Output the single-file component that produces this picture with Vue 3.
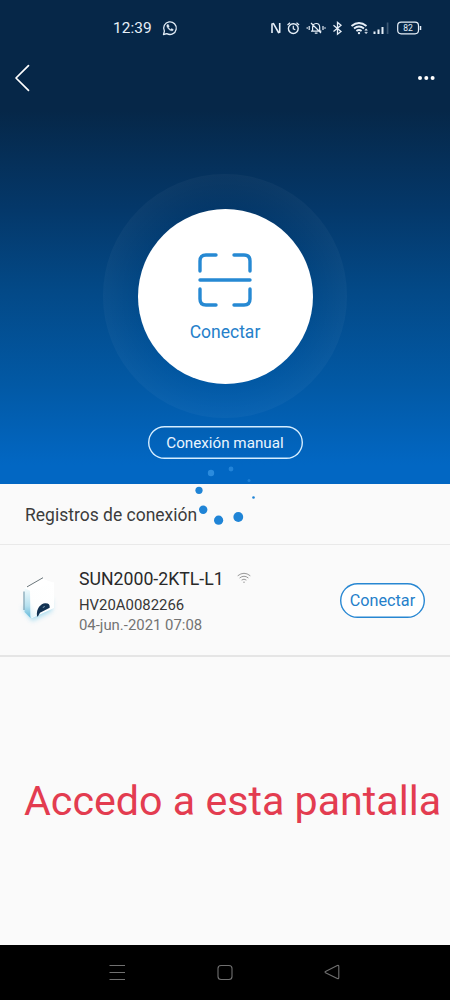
<script setup>
const dots = [
  { x: 21, y: 13, r: 3.2, o: 0.5 },
  { x: 41, y: 9, r: 2.4, o: 0.4 },
  { x: 59, y: 20.5, r: 1.5, o: 0.35 },
  { x: 63.5, y: 37.5, r: 1.3, o: 1 },
  { x: 9, y: 30.3, r: 3.6, o: 1 },
  { x: 13.2, y: 49.8, r: 4.2, o: 1 },
  { x: 28.6, y: 60.2, r: 4.6, o: 1 },
  { x: 48.3, y: 57, r: 4.9, o: 1 },
]
</script>

<template>
  <div class="screen">
    <section class="hero">
      <div class="status">
        <span class="clock">12:39</span>
        <svg class="chat" width="16" height="16" viewBox="0 0 16 16" fill="none" stroke="#e3edf7" stroke-width="1.3">
          <path d="M1.5 14.5l.9-3.4A6.3 6.3 0 1 1 4.8 13.6z" stroke-linejoin="round" />
          <path d="M5.2 4.6c-1 1.1-.2 3 1.3 4.5s3.500 2.300 4.600 1.200l.2-.8-1.700-.9-.9.8c-1-.4-1.800-1.200-2.200-2.200l.7-.8-.8-1.800z" fill="#e3edf7" stroke-width=".4" />
        </svg>
        <svg class="indicators" width="156" height="20" viewBox="268 18 156 20" fill="none" stroke="#e6eff8" stroke-width="1.4">
          <path d="M272 33V24l1.500-.4 5 8.900 1.200-.4V23" stroke-width="1.600" />
          <circle cx="293.300" cy="28.600" r="4.900" />
          <path d="M293.300 25.800v3l2 1M287.500 25l2.600-2.300M299.100 25l-2.600-2.300" stroke-width="1.200" />
          <path d="M311 31.200h10.400M312.600 31v-3.500q0-3.800 3.500-4t3.600 4V31M314.800 33.100h2.700M311 23l10 10" stroke-width="1.200" />
          <path d="M309.200 26v4M307.200 27.200v1.600M323 26v4M325 27.200v1.600" stroke-width="1.200" />
          <path d="M333.500 25.200l7.500 6.200-3.500 2.800V22.400l3.500 2.800-7.500 6.200" stroke-width="1.300" />
          <path d="M351.500 26q7.500-6 15 0M354 28.600q5-4 10 0M356.400 31q2.600-2 5.200 0" stroke-width="1.900" />
          <circle cx="359" cy="33.100" r="1.200" fill="#e6eff8" stroke="none" />
          <path d="M364.800 30.300l1.300-1.500 1.300 1.500zM364.800 32.200l1.300 1.500 1.300-1.500z" fill="#e6eff8" stroke-width=".5" />
          <path d="M374.500 34v-2.500M378.500 34v-4.600M382.500 34v-7" stroke-width="2" />
          <path d="M387.600 34V22.500" stroke="#3c5874" stroke-width="1.700" />
          <rect x="397.700" y="22.200" width="20.800" height="11.600" rx="3.500" stroke-width="1.200" />
          <path d="M420.500 26v4" stroke-width="1.500" />
          <text x="408.100" y="31.200" text-anchor="middle" class="level">82</text>
        </svg>
      </div>
      <nav class="topbar">
        <svg width="18" height="28" viewBox="0 0 18 28" fill="none" stroke="#fff" stroke-width="1.700" stroke-linecap="round" stroke-linejoin="round">
          <path d="M15.500 1.700L3 14l12.500 12.300" />
        </svg>
        <svg width="20" height="8" viewBox="0 0 20 8" fill="#fff">
          <circle cx="4" cy="4" r="2" /><circle cx="10.300" cy="4" r="2" /><circle cx="16.600" cy="4" r="2" />
        </svg>
      </nav>
      <div class="halo">
        <div class="disc">
          <svg width="54" height="54" viewBox="0 0 54 54" fill="none" stroke="#2689d3" stroke-width="3.400" stroke-linecap="round">
            <path d="M2 18V8q0-6 6-6h10M36 2h10q6 0 6 6v10M2 36v10q0 6 6 6h10M36 52h10q6 0 6-6V36M2 27h50" />
          </svg>
          <span class="disc-label">Conectar</span>
        </div>
      </div>
      <button class="manual">Conexión manual</button>
    </section>

    <main class="records">
      <h2 class="heading">
        <span>Registros de conexión</span>
        <svg class="spinner" width="70" height="70" viewBox="0 0 70 70" fill="#1f84d6">
          <circle v-for="(d, i) in dots" :key="i" :cx="d.x" :cy="d.y" :r="d.r" :class="{ faded: d.o < 1 }" :fill-opacity="d.o" />
        </svg>
      </h2>
      <article class="record">
        <svg class="device" width="44" height="54" viewBox="0 0 44 54">
          <defs>
            <linearGradient id="side" x1="0" y1="0" x2="0" y2="1">
              <stop offset="0" stop-color="#f3fbfd" /><stop offset=".6" stop-color="#b5e0ef" /><stop offset="1" stop-color="#62b8d9" />
            </linearGradient>
            <linearGradient id="front" x1="1" y1="0" x2="0" y2="1">
              <stop offset="0" stop-color="#fff" /><stop offset=".75" stop-color="#fdfefe" /><stop offset="1" stop-color="#d9f0f8" />
            </linearGradient>
            <filter id="soft" x="-50%" y="-50%" width="200%" height="200%"><feGaussianBlur stdDeviation="2.500" /></filter>
          </defs>
          <path d="M7 34L17 48 37 38V26L13 34z" fill="#8ed2ec" filter="url(#soft)" opacity=".75" />
          <path d="M9.500 15L26 5 39 10V35L17 45 9.500 38z" fill="#fff" />
          <path d="M9.500 15L15.500 18V45L9.500 39z" fill="url(#side)" />
          <path d="M15 18L39 9V34L16 45z" fill="url(#front)" />
          <path d="M12 13.900L28 4.700" stroke="#59656b" stroke-width=".9" />
          <path d="M9 18.500V37" stroke="#5e8da2" stroke-width="1" />
          <path d="M22 43.500C21 35 26 30.800 30 30.300c3.500-.2 5 1.300 4.700 4.400l-9.700 5-2 3.500z" fill="#123252" />
          <path d="M27.800 34.500l2-1" stroke="#86a6bb" />
        </svg>
        <div class="info">
          <div class="name">
            <span>SUN2000-2KTL-L1</span>
            <svg width="14" height="12" viewBox="0 0 14 12" fill="none" stroke="#8c8c8c" stroke-width=".9">
              <path d="M.7 3.800q6.300-5 12.600 0M2.600 6q4.400-3.500 8.800 0M4.600 8.100q2.400-1.900 4.800 0" />
              <circle cx="7" cy="10.200" r=".6" fill="#777" stroke="none" />
            </svg>
          </div>
          <div class="serial">HV20A0082266</div>
          <div class="date">04-jun.-2021 07:08</div>
        </div>
        <button class="connect">Conectar</button>
      </article>
      <p class="caption">Accedo a esta pantalla</p>
    </main>

    <footer class="navbar">
      <svg width="18" height="18" viewBox="0 0 18 18" fill="none" stroke="#707070" stroke-width="1.100"><path d="M1.500 2.500h15.500M1.500 9.500h15.500M1.500 16.500h15.500" /></svg>
      <svg width="18" height="18" viewBox="0 0 18 18" fill="none" stroke="#707070" stroke-width="1.100"><rect x="2" y="2.500" width="14" height="14" rx="3" /></svg>
      <svg width="18" height="18" viewBox="0 0 18 18" fill="none" stroke="#707070" stroke-width="1.100" stroke-linejoin="round"><path d="M2.500 8.500L14.300 2.500q1.500-.5 1.500 1v11q0 1.500-1.500 1L2.500 9.700q-1-.6 0-1.200z" /></svg>
    </footer>
  </div>
</template>

<style>
body { margin: 0; }
</style>

<style scoped>
.screen { width: 450px; height: 1000px; display: flex; flex-direction: column; overflow: hidden; background: #fafafa; font-family: Roboto, sans-serif; }
.screen * { box-sizing: border-box; }
svg { display: block; flex: none; }
button { padding: 0; border: 0; font-family: inherit; white-space: nowrap; }
.hero { height: 484px; flex: none; display: flex; flex-direction: column; align-items: center; background: linear-gradient(#062748 0, #062748 110px, #04386a 210px, #034987 290px, #0259a5 385px, #0267c3 465px, #0267c3 100%); }
.status { width: 100%; height: 56px; display: flex; align-items: center; padding: 0 26px 0 113px; }
.clock { width: 49px; font-size: 15.4px; letter-spacing: .1px; color: #e6eff8; }
.indicators { margin-left: auto; }
.level { font-size: 8.5px; fill: #e6eff8; stroke: none; }
.topbar { width: 100%; height: 44px; display: flex; align-items: center; justify-content: space-between; padding: 0 14px 0 13px; }
.halo { width: 244px; height: 244px; margin-top: 74px; border-radius: 50%; display: flex; align-items: center; justify-content: center; background: radial-gradient(circle closest-side, rgba(255,255,255,0) 72%, rgba(255,255,255,.03) 99%, rgba(255,255,255,.035)); }
.disc { width: 175px; height: 175px; border-radius: 50%; background: #fff; display: flex; flex-direction: column; align-items: center; padding-top: 44px; }
.disc-label { margin-top: 14px; font-size: 17.5px; line-height: 22px; color: #2580ca; }
.manual { width: 155px; height: 33px; margin-top: 8px; padding-top: 1px; box-shadow: inset 0 0 0 1.4px #d5edff; border-radius: 17px; background: none; color: #eaf5ff; font-size: 15.2px; }
.records { flex: 1; }
.heading { position: relative; height: 61px; margin: 0; padding: 1px 25px 0; display: flex; align-items: center; border-bottom: 1px solid #e9e9e9; color: #3c3c3c; font-size: 17.5px; font-weight: 400; }
.spinner { position: absolute; left: 190px; top: -24px; }
.faded { fill: #53b0f7; }
.record { height: 112px; display: flex; align-items: center; padding: 0 25px 0 15px; border-bottom: 2px solid #e5e5e5; }
.info { flex: 1; margin-left: 20px; }
.name { display: flex; align-items: center; gap: 13px; color: #292929; font-size: 17.7px; line-height: 26px; }
.name svg { margin-top: -2px; }
.serial { color: #373737; font-size: 14.9px; line-height: 22px; padding-top: 2px; }
.date { color: #737373; font-size: 14.9px; line-height: 18px; }
.connect { width: 85px; height: 35px; box-shadow: inset 0 0 0 1.4px #2887d2; border-radius: 18px; background: #fff; color: #2580ca; font-size: 16.2px; padding-top: 1px; }
.caption { margin: 119px 0 0 24px; white-space: nowrap; font-size: 41.2px; line-height: 50px; color: #e33c50; }
.navbar { height: 55px; flex: none; display: flex; align-items: center; justify-content: space-between; padding: 0 109px 1px 108px; background: #000; }
</style>
